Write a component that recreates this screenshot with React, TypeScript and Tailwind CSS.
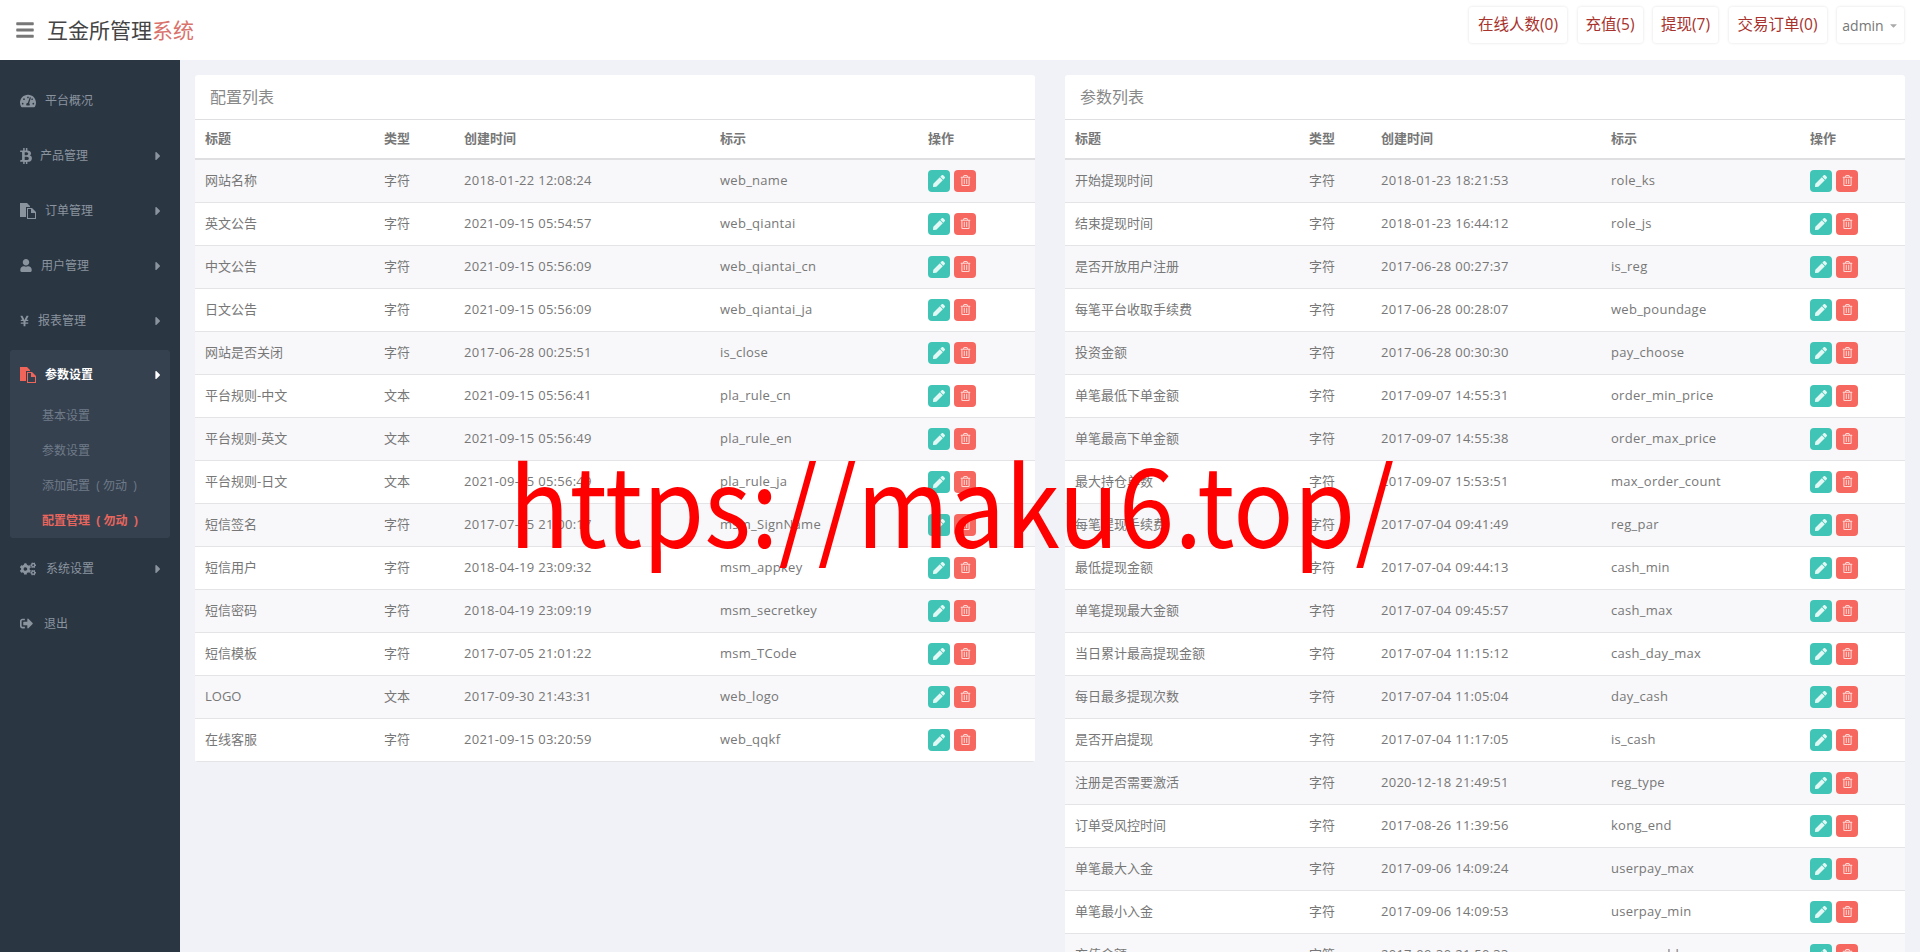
import { FaBars, FaBtc, FaCaretDown, FaCaretRight, FaCogs, FaPen, FaRegTrashAlt, FaSignOutAlt, FaTachometerAlt, FaUser, FaYenSign } from 'react-icons/fa';

type Row = [string, string, string, string];

const leftRows: Row[] = [
  ['网站名称', '字符', '2018-01-22 12:08:24', 'web_name'],
  ['英文公告', '字符', '2021-09-15 05:54:57', 'web_qiantai'],
  ['中文公告', '字符', '2021-09-15 05:56:09', 'web_qiantai_cn'],
  ['日文公告', '字符', '2021-09-15 05:56:09', 'web_qiantai_ja'],
  ['网站是否关闭', '字符', '2017-06-28 00:25:51', 'is_close'],
  ['平台规则-中文', '文本', '2021-09-15 05:56:41', 'pla_rule_cn'],
  ['平台规则-英文', '文本', '2021-09-15 05:56:49', 'pla_rule_en'],
  ['平台规则-日文', '文本', '2021-09-15 05:56:49', 'pla_rule_ja'],
  ['短信签名', '字符', '2017-07-05 21:00:17', 'msm_SignName'],
  ['短信用户', '字符', '2018-04-19 23:09:32', 'msm_appkey'],
  ['短信密码', '字符', '2018-04-19 23:09:19', 'msm_secretkey'],
  ['短信模板', '字符', '2017-07-05 21:01:22', 'msm_TCode'],
  ['LOGO', '文本', '2017-09-30 21:43:31', 'web_logo'],
  ['在线客服', '字符', '2021-09-15 03:20:59', 'web_qqkf'],
];

const rightRows: Row[] = [
  ['开始提现时间', '字符', '2018-01-23 18:21:53', 'role_ks'],
  ['结束提现时间', '字符', '2018-01-23 16:44:12', 'role_js'],
  ['是否开放用户注册', '字符', '2017-06-28 00:27:37', 'is_reg'],
  ['每笔平台收取手续费', '字符', '2017-06-28 00:28:07', 'web_poundage'],
  ['投资金额', '字符', '2017-06-28 00:30:30', 'pay_choose'],
  ['单笔最低下单金额', '字符', '2017-09-07 14:55:31', 'order_min_price'],
  ['单笔最高下单金额', '字符', '2017-09-07 14:55:38', 'order_max_price'],
  ['最大持仓单数', '字符', '2017-09-07 15:53:51', 'max_order_count'],
  ['每笔提现手续费', '字符', '2017-07-04 09:41:49', 'reg_par'],
  ['最低提现金额', '字符', '2017-07-04 09:44:13', 'cash_min'],
  ['单笔提现最大金额', '字符', '2017-07-04 09:45:57', 'cash_max'],
  ['当日累计最高提现金额', '字符', '2017-07-04 11:15:12', 'cash_day_max'],
  ['每日最多提现次数', '字符', '2017-07-04 11:05:04', 'day_cash'],
  ['是否开启提现', '字符', '2017-07-04 11:17:05', 'is_cash'],
  ['注册是否需要激活', '字符', '2020-12-18 21:49:51', 'reg_type'],
  ['订单受风控时间', '字符', '2017-08-26 11:39:56', 'kong_end'],
  ['单笔最大入金', '字符', '2017-09-06 14:09:24', 'userpay_max'],
  ['单笔最小入金', '字符', '2017-09-06 14:09:53', 'userpay_min'],
  ['充值金额', '字符', '2017-09-30 21:50:33', 'userpay_bl'],
];

const headerLinks = [
  { label: '在线人数(0)', width: 'w-[98px]' },
  { label: '充值(5)', width: 'w-[65px]' },
  { label: '提现(7)', width: 'w-[65px]' },
  { label: '交易订单(0)', width: 'w-[98px]' },
];

function FilesIcon({ className }: { className: string }) {
  return (
    <svg viewBox="0 0 16 16" className={className} fill="currentColor">
      <path d="M0 0h7l3 3v1H6v10H0z" />
      <path d="M7 5h5l4 4v7H7zM8 6v9h7v-5h-4V6z" fillRule="evenodd" />
    </svg>
  );
}

function NavItem({ icon, label, gap, arrow = true }: { icon: React.ReactNode; label: string; gap: string; arrow?: boolean }) {
  return (
    <div className="flex h-[55px] items-center pl-5 pr-[15px] text-[12px] text-[#8a949f]">
      <span className="flex w-4 justify-start">{icon}</span>
      <span className={gap}>{label}</span>
      {arrow && <FaCaretRight className="ml-auto text-[14px]" />}
    </div>
  );
}

function DataTable({ title, rows, widths }: { title: string; rows: Row[]; widths: string[] }) {
  return (
    <div className="w-[840px] self-start overflow-hidden rounded-[3px] bg-white">
      <div className="flex h-[45px] items-center border-b border-[#dfdfe2] pl-[15px] text-[16px] text-[#888]">{title}</div>
      <table className="w-full table-fixed text-[13px] text-[#777]">
        <colgroup>
          {widths.map((w) => (
            <col key={w} className={w} />
          ))}
        </colgroup>
        <thead>
          <tr className="h-[39px] border-b-2 border-[#dfdfe2] text-left">
            {['标题', '类型', '创建时间', '标示', '操作'].map((h) => (
              <th key={h} className="pl-[10px] font-bold">
                {h}
              </th>
            ))}
          </tr>
        </thead>
        <tbody>
          {rows.map((r, i) => (
            <tr key={r[3]} className={`h-[43px] border-b border-[#e4e4e7] ${i % 2 === 0 ? 'bg-[#f8f8fa]' : 'bg-white'}`}>
              <td className="pl-[10px] whitespace-nowrap">{r[0]}</td>
              <td className="pl-[10px] whitespace-nowrap">{r[1]}</td>
              <td className="pl-[10px] whitespace-nowrap tracking-[0.27px]">{r[2]}</td>
              <td className="pl-[10px] whitespace-nowrap tracking-[0.27px]">{r[3]}</td>
              <td className="pl-[10px]">
                <div className="flex gap-[4px]">
                  <span className="flex h-[22px] w-[22px] items-center justify-center rounded-[4px] bg-[#3fc4b6] text-[12px] text-[#e2f8f5]">
                    <FaPen />
                  </span>
                  <span className="flex h-[22px] w-[22px] items-center justify-center rounded-[4px] bg-[#f6675f] text-[11px] text-[#ffd9d6]">
                    <FaRegTrashAlt />
                  </span>
                </div>
              </td>
            </tr>
          ))}
        </tbody>
      </table>
    </div>
  );
}

export default function App() {
  return (
    <div className="relative flex h-[952px] flex-col overflow-hidden bg-[#f1f2f7] font-['Open_Sans','Noto_Sans_CJK_SC',sans-serif]">
      <header className="flex h-[60px] shrink-0 items-center bg-white">
        <FaBars className="ml-[15px] text-[20px] text-[#777]" />
        <h1 className="ml-[12px] mt-[1px] text-[21px] font-normal text-[#444]">
          互金所管理<span className="text-[#d9736c]">系统</span>
        </h1>
        <div className="mb-[10px] ml-auto mr-[16px] flex items-center gap-[10.5px]">
          {headerLinks.map((t) => (
            <span key={t.label} className={`flex h-[36px] items-center justify-center rounded-[3px] text-[15.5px] text-[#a8322c] shadow-[0_0_3px_rgba(0,0,0,0.12)] ${t.width}`}>
              {t.label}
            </span>
          ))}
          <span className="flex h-[36px] w-[67px] items-center justify-center gap-[4px] rounded-[3px] text-[14px] text-[#777] shadow-[0_0_3px_rgba(0,0,0,0.12)]">
            admin <FaCaretDown className="text-[11px] text-[#aaa]" />
          </span>
        </div>
      </header>
      <div className="flex min-h-0 flex-1">
        <aside className="w-[180px] shrink-0 bg-[#2b3643] pt-[13px]">
          <NavItem icon={<FaTachometerAlt className="text-[16px]" />} label="平台概况" gap="ml-[9px]" arrow={false} />
          <NavItem icon={<FaBtc className="h-[16px] w-[12px]" />} label="产品管理" gap="ml-[4px]" />
          <NavItem icon={<FilesIcon className="h-[16px] w-[16px]" />} label="订单管理" gap="ml-[9px]" />
          <NavItem icon={<FaUser className="h-[13px] w-[12px]" />} label="用户管理" gap="ml-[5px]" />
          <NavItem icon={<FaYenSign className="h-[12px] w-[9px]" />} label="报表管理" gap="ml-[2px]" />
          <div className="mx-[10px] mb-[3px] mt-[2px] rounded-[3px] bg-[#364150] pt-[2px]">
            <div className="flex h-[46px] items-center pl-[10px] pr-[5px] text-[12px] font-bold text-white">
              <span className="flex w-4 justify-start">
                <FilesIcon className="h-[16px] w-[16px] text-[#f0645a]" />
              </span>
              <span className="ml-[9px]">参数设置</span>
              <FaCaretRight className="ml-auto text-[14px]" />
            </div>
            <div className="pl-[32px] text-[12px] text-[#6f7b88]">
              <div className="flex h-[35px] items-center">基本设置</div>
              <div className="flex h-[35px] items-center">参数设置</div>
              <div className="flex h-[35px] items-center">添加配置{'\u00a0\u00a0(\u00a0'}勿动{'\u00a0\u00a0)'}</div>
              <div className="flex h-[35px] items-center font-bold text-[#e8665d]">配置管理{'\u00a0\u00a0(\u00a0'}勿动{'\u00a0\u00a0)'}</div>
            </div>
          </div>
          <NavItem icon={<FaCogs className="text-[16px]" />} label="系统设置" gap="ml-[10px]" />
          <NavItem icon={<FaSignOutAlt className="text-[13px]" />} label="退出" gap="ml-[8px]" arrow={false} />
        </aside>
        <main className="flex min-w-0 flex-1 gap-[30px] pl-[15px] pt-[15px]">
          <DataTable title="配置列表" rows={leftRows} widths={['w-[179px]', 'w-[80px]', 'w-[256px]', 'w-[208px]', 'w-[117px]']} />
          <DataTable title="参数列表" rows={rightRows} widths={['w-[234px]', 'w-[72px]', 'w-[230px]', 'w-[199px]', 'w-[105px]']} />
        </main>
      </div>
      <div className="absolute left-[509px] top-[425px] origin-left scale-x-[0.906] whitespace-nowrap font-['Noto_Sans_CJK_SC',sans-serif] text-[110px] font-normal leading-[150px] text-[#ff0000]">
        https://maku6.top/
      </div>
    </div>
  );
}
